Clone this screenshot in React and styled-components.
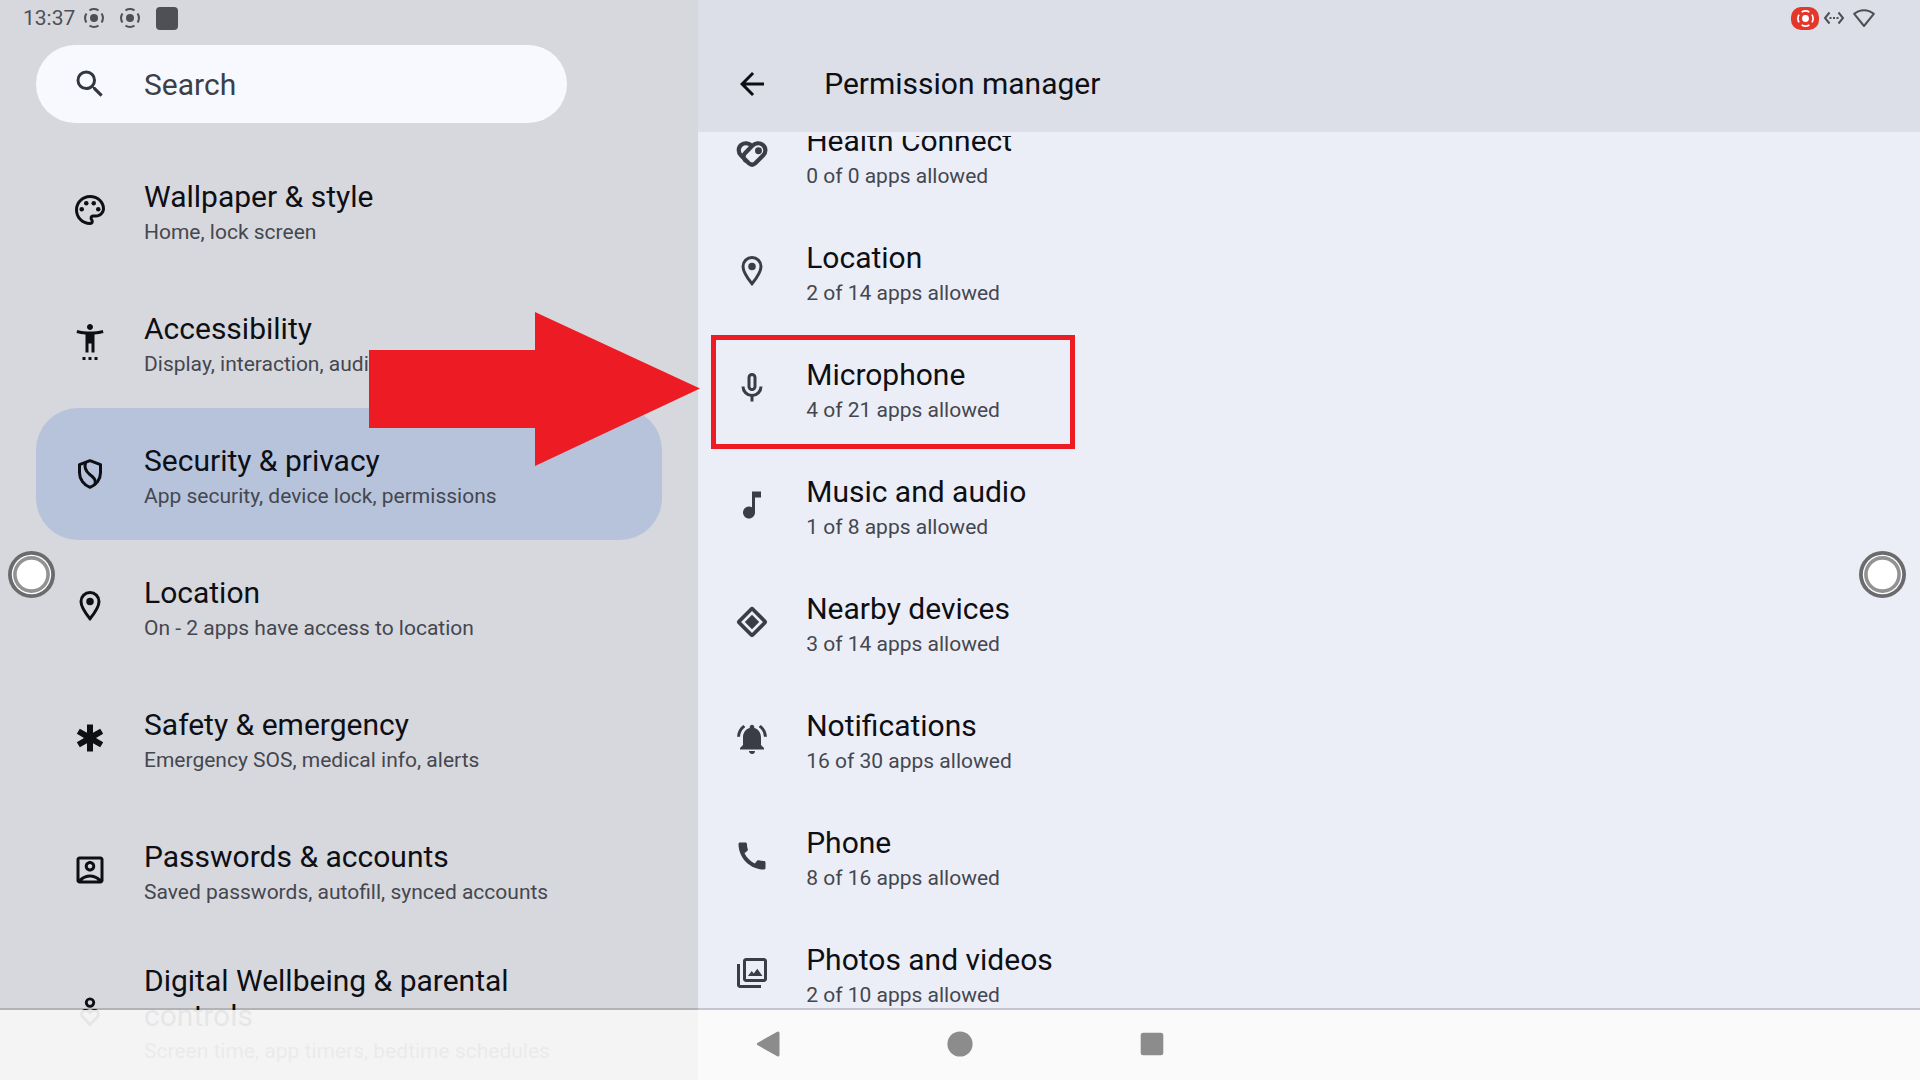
import React, { useState } from 'react';
import styled, { createGlobalStyle } from 'styled-components';
import {
    MdArrowBack,
    MdCall,
    MdEmergency,
    MdMusicNote,
    MdNotificationsActive,
    MdOutlineAccountBox,
    MdOutlinePalette,
    MdSearch,
    MdSettingsAccessibility
} from 'react-icons/md';

const GlobalStyle = createGlobalStyle`
    *, *::before, *::after {
        box-sizing: border-box;
    }

    body {
        margin: 0;
        font-family: Roboto, "Liberation Sans", sans-serif;
        color: #0d0f14;
    }

    button, input {
        font-family: inherit;
        color: inherit;
    }
`;

const Screen = styled.div`
    position: relative;
    display: flex;
    height: 100vh;
    overflow: hidden;
`;

const SidePane = styled.aside`
    flex: 4 1 0;
    display: flex;
    flex-direction: column;
    min-width: 0;
    background: #d7d8dd;
`;

const DetailPane = styled.main`
    position: relative;
    flex: 7 1 0;
    display: flex;
    flex-direction: column;
    min-width: 0;
    background: #eceef7;
`;

const StatusBar = styled.div`
    display: flex;
    flex: none;
    align-items: center;
    justify-content: ${props => props.$end ? 'flex-end' : 'flex-start'};
    height: 36px;
    padding: ${props => props.$end ? '0 45px' : '0 23px'};
    color: #4e5056;
`;

const Clock = styled.time`
    margin-right: 9px;
    font-size: 21px;
    line-height: 36px;
`;

const CastIcon = styled.svg`
    width: 20px;
    height: 20px;
    margin-right: 16px;
`;

const AppBadge = styled.span`
    width: 22px;
    height: 23px;
    border-radius: 4px;
    background: #4e5056;
`;

const RecordingPill = styled.span`
    display: flex;
    align-items: center;
    justify-content: center;
    width: 28px;
    height: 23px;
    border-radius: 10px;
    background: #e3372c;
    color: #fff;

    svg {
        width: 17px;
        height: 17px;
        margin: 0;
    }
`;

const StatusIcon = styled.svg`
    width: 22px;
    height: 20px;
    margin-left: ${props => props.$gap}px;
`;

const SearchBox = styled.label`
    display: flex;
    flex: none;
    align-items: center;
    width: 76%;
    height: 78px;
    margin: 9px 0 21px 36px;
    padding-left: 36px;
    border-radius: 39px;
    background: #f7f9ff;
    color: #33363d;

    svg {
        flex: none;
        width: 36px;
        height: 36px;
    }
`;

const SearchInput = styled.input`
    flex: 1;
    min-width: 0;
    margin-left: 36px;
    padding: 0;
    border: 0;
    outline: 0;
    background: none;
    font-size: 30px;

    &::placeholder {
        color: #3c3f46;
        opacity: 1;
    }
`;

const Header = styled.header`
    flex: none;
    height: 132px;
    background: #dddfe8;
`;

const TitleBar = styled.div`
    display: flex;
    align-items: center;
    height: 96px;
    padding-left: 36px;
`;

const BackButton = styled.button`
    display: flex;
    padding: 0;
    border: 0;
    background: none;
    cursor: pointer;

    svg {
        width: 36px;
        height: 36px;
    }
`;

const PageTitle = styled.h1`
    margin: 0 0 0 54px;
    font-size: 30px;
    line-height: 36px;
    font-weight: 400;
`;

const SideList = styled.nav`
    padding: 0 36px;
`;

const DetailViewport = styled.div`
    flex: 1;
    min-height: 0;
    margin: 4px 0 72px;
    overflow: hidden;
`;

const DetailList = styled.div`
    margin-top: -41px;
`;

const Row = styled.button`
    display: flex;
    align-items: center;
    width: 100%;
    min-height: ${props => props.$compact ? 117 : 132}px;
    padding: ${props => props.$compact ? '22px 36px' : '22px 72px 22px 36px'};
    border: 0;
    border-radius: 42px;
    background: ${props => props.$active ? '#b6c3db' : 'transparent'};
    text-align: left;
    cursor: pointer;

    > svg {
        flex: none;
        width: 36px;
        height: 36px;
        color: ${props => props.$compact ? '#3a3d45' : '#0d0f14'};
    }
`;

const RowText = styled.span`
    display: flex;
    flex-direction: column;
    margin-left: 36px;
    padding-top: 5px;
`;

const RowTitle = styled.span`
    font-size: 30px;
    line-height: 35px;
`;

const RowSummary = styled.span`
    margin-top: 5px;
    font-size: 21px;
    line-height: 27px;
    color: #44474f;
`;

const Highlight = styled.div`
    position: absolute;
    top: 335px;
    left: 13px;
    width: 364px;
    height: 114px;
    border: 5px solid #ed1c24;
    pointer-events: none;
`;

const PointerArrow = styled.svg`
    position: absolute;
    top: 312px;
    left: -329px;
    width: 331px;
    height: 154px;
    pointer-events: none;
`;

const TouchHandle = styled.button`
    position: absolute;
    top: 551px;
    ${props => props.$side}: ${props => props.$side === 'left' ? 8 : 14}px;
    display: flex;
    padding: 0;
    border: 0;
    background: none;

    svg {
        width: 47px;
        height: 47px;
    }
`;

const NavBar = styled.nav`
    position: absolute;
    right: 0;
    bottom: 0;
    left: 0;
    display: flex;
    justify-content: center;
    height: 72px;
    padding-bottom: 2px;
    border-top: 2px solid rgba(0, 0, 0, 0.17);
    background: linear-gradient(to right, rgba(246, 246, 246, 0.93) 36.36%, #fafafa 36.36%);
    background-clip: padding-box;
`;

const NavButton = styled.button`
    display: flex;
    align-items: center;
    justify-content: center;
    width: 192px;
    padding: 0;
    border: 0;
    background: none;
    color: #8c8c8c;
    cursor: pointer;

    svg {
        width: 30px;
        height: 30px;
    }
`;

const Cast = () => (
    <CastIcon viewBox="0 0 20 20" fill="none" stroke="currentColor" strokeWidth="2">
        <circle cx="10" cy="10" r="4" fill="currentColor" stroke="none" />
        <path d="M5.5 2.4a8.800 8.800 0 0 1 9 0M5.500 17.600a8.800 8.800 0 0 0 9 0M2.400 5.500a8.800 8.800 0 0 0 0 9M17.600 5.500a8.800 8.800 0 0 1 0 9" />
    </CastIcon>
);

const PinIcon = () => (
    <svg viewBox="0 0 24 24" fill="none" stroke="currentColor" strokeWidth="2">
        <path d="M12 20.500c-4-4.900-6-8.700-6-11.500a6 6 0 0 1 12 0c0 2.800-2 6.600-6 11.500z" />
        <circle cx="12" cy="9" r="2.500" fill="currentColor" stroke="none" />
    </svg>
);

const MicIcon = () => (
    <svg viewBox="0 0 24 24" fill="none" stroke="currentColor" strokeWidth="2">
        <rect x="10" y="3" width="4" height="10" rx="2" />
        <path d="M6 11a6 6 0 0 0 12 0M12 17v4" />
    </svg>
);

const ShieldIcon = () => (
    <svg viewBox="0 0 24 24" fill="none" stroke="currentColor" strokeWidth="2" strokeLinejoin="round">
        <path d="M12 3.100 19 5.700v5.400c0 4.400-2.900 8.200-7 9.800-4.100-1.600-7-5.400-7-9.800V5.700z" />
        <path d="M9.100 4.300C8 7.500 8.700 9.700 11.700 12.200c3.400 2.600 4.400 4 3.600 6.800" />
    </svg>
);

const WellbeingIcon = () => (
    <svg viewBox="0 0 24 24" fill="none" stroke="currentColor" strokeWidth="1.9">
        <circle cx="12" cy="5.700" r="2.500" />
        <path d="M12 20.300l-4.400-4.400c-3.200-3.300.8-7.200 4.400-3.500 3.600-3.700 7.600.2 4.400 3.500z" />
    </svg>
);

const HealthIcon = () => (
    <svg viewBox="0 0 24 24" fill="none" stroke="currentColor" strokeWidth="2.800" strokeLinecap="round" strokeLinejoin="round">
        <path d="M12 6.600C9.800 4.600 7 4.300 4.800 5.900 2.600 7.800 2.700 11 4.600 12.900l5.300 5.300c1.300 1.200 3 1.200 4.300 0l5.300-5.300c1.900-1.900 2-5.100-.3-7-2.200-1.600-5-1.200-7.200.8l-4.500 4.600c-1.500 1.700-1.500 3.500 0 5" />
        <circle cx="16.300" cy="9.800" r="2.300" fill="currentColor" stroke="none" />
    </svg>
);

const NearbyIcon = () => (
    <svg viewBox="0 0 24 24" fill="currentColor">
        <path fillRule="evenodd" d="M10.600 2.600a2 2 0 0 1 2.800 0l8 8a2 2 0 0 1 0 2.800l-8 8a2 2 0 0 1-2.800 0l-8-8a2 2 0 0 1 0-2.800zM12 4.700 4.700 12l7.300 7.300 7.300-7.300z" />
        <path d="m12 7.200 4.800 4.800-4.800 4.800L7.200 12z" />
    </svg>
);

const PhotosIcon = () => (
    <svg viewBox="0 0 24 24" fill="currentColor">
        <path d="M20 4v12H8V4h12m0-2H8c-1.100 0-2 .9-2 2v12c0 1.100.9 2 2 2h12c1.100 0 2-.9 2-2V4c0-1.100-.9-2-2-2zM2 6v14c0 1.100.9 2 2 2h14v-2H4V6z" />
        <path d="M9.300 14l2.500-3.300 1.400 1.700 2.300-3.200 3.500 4.800z" />
    </svg>
);

const HandleIcon = () => (
    <svg viewBox="0 0 47 47">
        <circle cx="23.500" cy="23.500" r="23.500" fill="#6b6b6d" />
        <circle cx="23.500" cy="23.500" r="19.700" fill="#fff" />
        <circle cx="23.500" cy="23.500" r="18.400" fill="#929292" />
        <circle cx="23.500" cy="23.500" r="14.800" fill="#fff" />
    </svg>
);

const sideItems = [
    { title: 'Wallpaper & style', summary: 'Home, lock screen', icon: MdOutlinePalette },
    { title: 'Accessibility', summary: 'Display, interaction, audio', icon: MdSettingsAccessibility },
    { title: 'Security & privacy', summary: 'App security, device lock, permissions', icon: ShieldIcon },
    { title: 'Location', summary: 'On - 2 apps have access to location', icon: PinIcon },
    { title: 'Safety & emergency', summary: 'Emergency SOS, medical info, alerts', icon: MdEmergency },
    { title: 'Passwords & accounts', summary: 'Saved passwords, autofill, synced accounts', icon: MdOutlineAccountBox },
    { title: 'Digital Wellbeing & parental controls', summary: 'Screen time, app timers, bedtime schedules', icon: WellbeingIcon }
];

const permissions = [
    { title: 'Health Connect', allowed: 0, total: 0, icon: HealthIcon },
    { title: 'Location', allowed: 2, total: 14, icon: PinIcon },
    { title: 'Microphone', allowed: 4, total: 21, icon: MicIcon },
    { title: 'Music and audio', allowed: 1, total: 8, icon: MdMusicNote },
    { title: 'Nearby devices', allowed: 3, total: 14, icon: NearbyIcon },
    { title: 'Notifications', allowed: 16, total: 30, icon: MdNotificationsActive },
    { title: 'Phone', allowed: 8, total: 16, icon: MdCall },
    { title: 'Photos and videos', allowed: 2, total: 10, icon: PhotosIcon }
];

const SettingRow = ({ item, summary, ...rest }) => {
    const Icon = item.icon;
    return (
        <Row type="button" {...rest}>
            <Icon />
            <RowText>
                <RowTitle>{item.title}</RowTitle>
                <RowSummary>{summary}</RowSummary>
            </RowText>
        </Row>
    );
};

const App = () => {
    const [selected, setSelected] = useState('Security & privacy');
    const [query, setQuery] = useState('');

    return (
        <Screen>
            <GlobalStyle />
            <SidePane>
                <StatusBar>
                    <Clock>13:37</Clock>
                    <Cast />
                    <Cast />
                    <AppBadge />
                </StatusBar>
                <SearchBox>
                    <MdSearch />
                    <SearchInput
                        type="text"
                        aria-label="Search"
                        placeholder="Search"
                        value={query}
                        onChange={event => setQuery(event.target.value)}
                    />
                </SearchBox>
                <SideList>
                    {sideItems.map(item => (
                        <SettingRow
                            key={item.title}
                            item={item}
                            summary={item.summary}
                            $active={item.title === selected}
                            onClick={() => setSelected(item.title)}
                        />
                    ))}
                </SideList>
            </SidePane>
            <DetailPane>
                <Header>
                    <StatusBar $end>
                        <RecordingPill><Cast /></RecordingPill>
                        <StatusIcon $gap={4} viewBox="0 0 22 20" fill="none" stroke="currentColor" strokeWidth="2">
                            <path d="M6.500 4.500 2 10l4.500 5.500M15.500 4.500 20 10l-4.500 5.500" />
                            <path d="M6.500 10h2M10 10h2M13.500 10h2" />
                        </StatusIcon>
                        <StatusIcon $gap={8} viewBox="0 0 22 20" fill="none" stroke="currentColor" strokeWidth="2" strokeLinejoin="round">
                            <path d="M11 18 1.200 5.800C7 .9 15 .9 20.800 5.800z" />
                        </StatusIcon>
                    </StatusBar>
                    <TitleBar>
                        <BackButton type="button" aria-label="Back"><MdArrowBack /></BackButton>
                        <PageTitle>Permission manager</PageTitle>
                    </TitleBar>
                </Header>
                <DetailViewport>
                    <DetailList>
                        {permissions.map(item => (
                            <SettingRow
                                key={item.title}
                                item={item}
                                summary={`${item.allowed} of ${item.total} apps allowed`}
                                $compact
                            />
                        ))}
                    </DetailList>
                </DetailViewport>
                <Highlight />
                <PointerArrow viewBox="0 0 331 154">
                    <path d="M0 38h166V0l165 76.500L166 154v-38H0z" fill="#ed1c24" />
                </PointerArrow>
            </DetailPane>
            <TouchHandle type="button" aria-label="Left handle" $side="left"><HandleIcon /></TouchHandle>
            <TouchHandle type="button" aria-label="Right handle" $side="right"><HandleIcon /></TouchHandle>
            <NavBar>
                <NavButton type="button" aria-label="Back">
                    <svg viewBox="0 0 30 30" fill="currentColor" stroke="currentColor" strokeWidth="3" strokeLinejoin="round">
                        <path d="M5.500 15 25 4v22z" />
                    </svg>
                </NavButton>
                <NavButton type="button" aria-label="Home">
                    <svg viewBox="0 0 30 30" fill="currentColor">
                        <circle cx="15" cy="15" r="12.600" />
                    </svg>
                </NavButton>
                <NavButton type="button" aria-label="Recent apps">
                    <svg viewBox="0 0 30 30" fill="currentColor">
                        <rect x="3.700" y="3.700" width="22.600" height="22.600" rx="2.500" />
                    </svg>
                </NavButton>
            </NavBar>
        </Screen>
    );
};

export default App;
